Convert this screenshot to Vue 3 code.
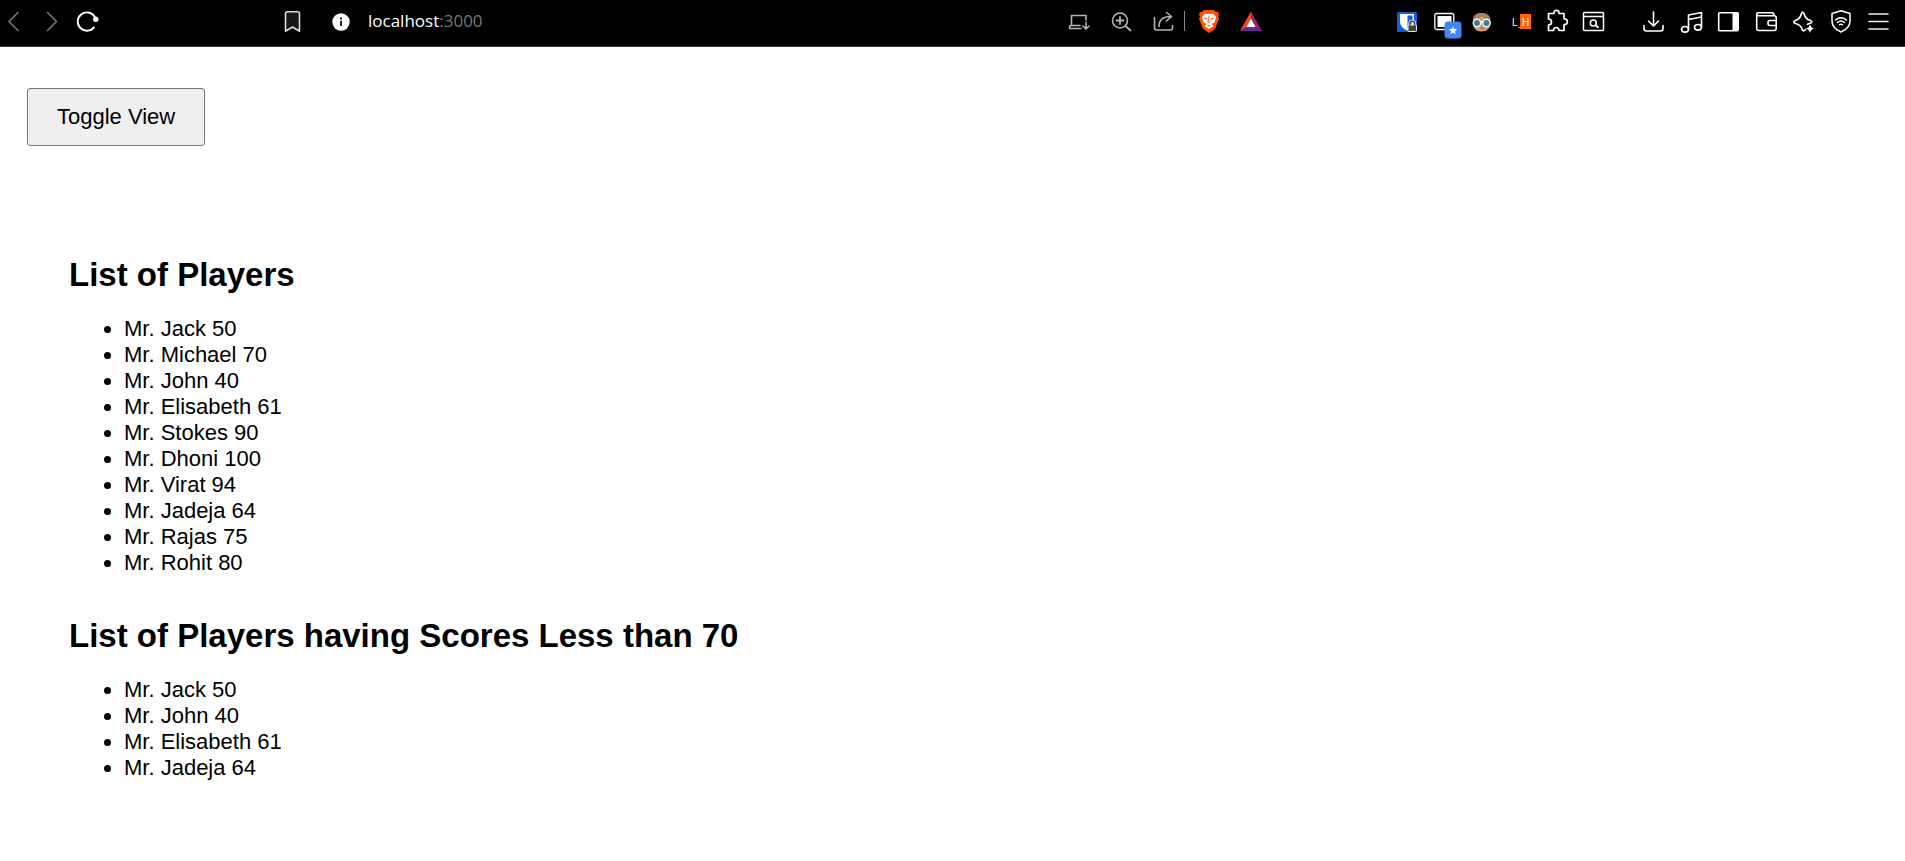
<script setup>
import { computed, ref } from 'vue'

const showing = ref(true)

const players = [
  { name: 'Jack', score: 50 },
  { name: 'Michael', score: 70 },
  { name: 'John', score: 40 },
  { name: 'Elisabeth', score: 61 },
  { name: 'Stokes', score: 90 },
  { name: 'Dhoni', score: 100 },
  { name: 'Virat', score: 94 },
  { name: 'Jadeja', score: 64 },
  { name: 'Rajas', score: 75 },
  { name: 'Rohit', score: 80 }
]

const lowScorers = computed(() => players.filter((p) => p.score < 70))
</script>

<template>
  <div class="window">
    <header class="toolbar">
      <nav class="nav" aria-label="History">
        <button class="icon dim" type="button" aria-label="Back">
          <svg viewBox="0 0 24 24"><path d="M17 3.5 8 12.5l9 9" /></svg>
        </button>
        <button class="icon dim" type="button" aria-label="Forward">
          <svg viewBox="0 0 24 24"><path d="M8.5 3.5l9 9-9 9" /></svg>
        </button>
        <button class="icon" type="button" aria-label="Reload">
          <svg viewBox="0 0 24 24">
            <path d="M17.6 7.500A9.200 9.200 0 1 0 17 18.400" stroke-width="1.9" />
            <circle class="solid" cx="18.800" cy="10.300" r="2.700" />
          </svg>
        </button>
      </nav>

      <div class="address">
        <button class="icon" type="button" aria-label="Bookmark this page">
          <svg viewBox="0 0 24 24">
            <path d="M7.500 2.700h10q2 0 2 2v17.500l-7-4.200-7 4.200V4.700q0-2 2-2z" fill="#161616" stroke="#ddd" stroke-width="1.6" />
          </svg>
        </button>
        <button class="icon site" type="button" aria-label="Site information">
          <svg viewBox="0 0 24 24">
            <circle class="solid" cx="12" cy="13" r="8.700" />
            <path d="M12 11.800V17" stroke="#222" stroke-width="2" stroke-linecap="butt" />
            <rect x="11" y="8.500" width="2" height="2" fill="#222" stroke="none" />
          </svg>
        </button>
        <div class="url" role="textbox" contenteditable="true" aria-label="Address">localhost<span class="port">:3000</span></div>
        <div class="tools">
          <button class="icon soft" type="button" aria-label="Install app">
            <svg viewBox="0 0 24 24">
              <path d="M19 11V6.500H4.500v10H13M4.500 16.500 2.700 17v2.500H14M19 13.500v6M16 17l3 3 3-3" />
            </svg>
          </button>
          <button class="icon soft" type="button" aria-label="Zoom">
            <svg viewBox="0 0 24 24">
              <circle cx="11" cy="11.500" r="7.500" />
              <path d="M16.500 17l5 4.500M7.500 11.500h7M11 8v7" stroke-width="1.8" />
            </svg>
          </button>
          <button class="icon soft" type="button" aria-label="Share">
            <svg viewBox="0 0 24 24">
              <path d="M3.500 8.500V19q0 2 2 2h14q2 0 2-2v-2.500M8 17.500C8 11 12 7.500 20 7.500M15.500 3.500l5 4-5 4.500" />
            </svg>
          </button>
        </div>
        <span class="divider"></span>
        <div class="tools">
          <button class="icon" type="button" aria-label="Brave Shields">
            <svg viewBox="0 0 24 24">
              <path d="M7 1h10l2 2 2-.3 1 3-1 2 1 2-3.500 9Q17 21.500 12 24 7 21.500 5.500 18.700L2 9.700l1-2-1-2 1-3L5 3z" fill="#ff5000" stroke="none" />
              <path d="M8 4.500l4 .6 4-.6 3 3.500-1.500 5.500-3 1.500 2 2L12 20l-4.500-3 2-2-3-1.500L5 8z" fill="#fff" stroke="none" />
              <path d="M7.500 9.500l2.500.5M16.500 9.500l-2.500.5M12 7v3l-1.200 2.500L12 13.500l1.200-1M10.500 17l1.500-.8 1.500.8" stroke="#ff5000" stroke-width="1" />
            </svg>
          </button>
          <button class="icon" type="button" aria-label="Brave Rewards">
            <svg viewBox="0 0 24 24">
              <g stroke="none">
                <path d="M12 2.500V10l-4 7.500L1 22z" fill="#ff4724" />
                <path d="M12 2.500 23 22l-7-4.500L12 10z" fill="#9e1f63" />
                <path d="M1 22l7-4.500h8l7 4.500z" fill="#662d91" />
                <path d="M12 9.500l4.500 8.500h-9z" fill="#fff" />
              </g>
            </svg>
          </button>
        </div>
      </div>

      <div class="extensions">
        <button class="icon" type="button" aria-label="Password manager">
          <svg viewBox="0 0 24 24">
            <g stroke="none">
              <rect x="1" y="3" width="20" height="20" rx="1.500" fill="#175ddc" />
              <path d="M4 5h14v8q0 5-7 8.500Q4 18 4 13z" fill="#fff" />
              <path d="M11.500 6.500h5V13q0 3-5 6z" fill="#175ddc" />
            </g>
            <path d="M13.800 16v-1.500q0-2.300 2.400-2.300t2.400 2.300V16" stroke="#e8e8e8" stroke-width="3" />
            <rect x="12" y="16" width="8.500" height="6.500" rx="1" fill="#444" stroke="#e8e8e8" stroke-width="1" />
            <path d="M13.800 16v-1.500q0-2.300 2.400-2.300t2.400 2.300V16" stroke="#444" stroke-width="1.400" />
          </svg>
        </button>
        <button class="icon" type="button" aria-label="Tab saver">
          <svg viewBox="0 0 24 24">
            <rect x="1.800" y="4.500" width="19" height="16" rx="2" stroke-width="1.300" />
            <rect class="solid" x="4.500" y="7" width="14" height="11" />
            <rect x="11.500" y="12.500" width="17" height="17" rx="3.500" fill="#4285f4" stroke="none" />
            <path class="solid" d="M20 17l1.100 3.100 3.300.1-2.600 2 .9 3.200-2.700-1.900-2.700 1.900.9-3.200-2.600-2 3.300-.1z" />
          </svg>
        </button>
        <button class="icon" type="button" aria-label="Profile">
          <svg viewBox="0 0 24 24">
            <g stroke="none">
              <path d="M3 13Q3 4 11.500 4T20.500 13q0 9.500-9 9.500T3 13z" fill="#d99a78" />
              <path d="M3 12Q2.500 4 11.500 4T20.500 12L17 11l-5-3.500L7 11z" fill="#a48661" />
              <path d="M9 18.500h6l-3 2z" fill="#b96d5a" />
            </g>
            <path d="M10 13h4" stroke-width="1.500" />
            <circle cx="7" cy="14" r="3.700" fill="#477b83" stroke="#e5f4f5" stroke-width="1.500" />
            <circle cx="16.500" cy="14" r="3.700" fill="#477b83" stroke="#e5f4f5" stroke-width="1.500" />
          </svg>
        </button>
        <button class="icon" type="button" aria-label="LH extension">
          <svg viewBox="0 0 24 24">
            <rect x="13" y="5" width="11" height="15" fill="#ff6600" stroke="none" />
            <text x="5" y="17">L</text>
            <text x="15" y="17">H</text>
            <path d="M11.500 18.500h1.500" stroke-width=".6" />
          </svg>
        </button>
        <button class="icon" type="button" aria-label="Extensions">
          <svg viewBox="0 0 24 24">
            <path d="M5 4.500h5C9 .3 16 .3 15 4.500h5V10c4.500-1 4.500 6.500 0 5.500v6h-5c0-4-5.500-4-5.500 0h-5V16c4 0 4-6 0-6V5q0-.5.500-.5z" stroke-width="1.700" />
          </svg>
        </button>
        <button class="icon" type="button" aria-label="Search tabs">
          <svg viewBox="0 0 24 24">
            <path d="M3.500 3.500h18q1 0 1 1v16q0 1-1 1h-18q-1 0-1-1v-16q0-1 1-1zM2.500 7.500h20" stroke-width="1.500" />
            <circle cx="12.300" cy="14" r="3" stroke-width="1.600" />
            <path d="M14.500 16.200l2.500 2" stroke-width="1.800" />
          </svg>
        </button>
      </div>

      <div class="system">
        <button class="icon" type="button" aria-label="Downloads">
          <svg viewBox="0 0 24 24">
            <path d="M13.500 3v14M8.500 12l5 5 5-5M4 16.500v3Q4 22 6.500 22h14q2.500 0 2.500-2.500v-3" />
          </svg>
        </button>
        <button class="icon" type="button" aria-label="Playlist">
          <svg viewBox="0 0 24 24">
            <path d="M10.500 20V6l13-2.500V18M10.500 10.500l13-2.500" />
            <ellipse cx="7" cy="20.300" rx="3.500" ry="2.800" />
            <ellipse cx="20" cy="18.300" rx="3.500" ry="2.800" />
          </svg>
        </button>
        <button class="icon" type="button" aria-label="Sidebar">
          <svg viewBox="0 0 24 24">
            <rect x="2.700" y="3.700" width="19.500" height="18" rx="1" />
            <path class="solid" d="M16.500 3.500H22V22h-5.500z" />
          </svg>
        </button>
        <button class="icon" type="button" aria-label="Wallet">
          <svg viewBox="0 0 24 24">
            <path d="M2.700 5.200q0-1.500 1.500-1.500H18q2 0 2 2.500M2.700 5.200q0 1.500 2 1.500H20q2.200 0 2.200 2v10.800q0 2-2 2H5q-2.300 0-2.300-2zM22 11.500h-6q-2 0-2 2v1q0 2 2 2h6" />
          </svg>
        </button>
        <button class="icon" type="button" aria-label="AI assistant">
          <svg viewBox="0 0 24 24">
            <path d="M13.500 20.500q-2.500 2.800-3.500-.5-1.300-4.200-6.500-5.500-3.500-1.500 0-3Q8 10 9.300 5q1.400-4 2.800 0 1.400 5 5.900 6.300 3.500 1.700 0 3l-2.500 1" stroke-width="1.700" />
            <path class="solid" d="M18 15.200q.9 3.600 4.300 4.400-3.400.8-4.300 4.400-.9-3.600-4.300-4.400 3.400-.8 4.300-4.400z" />
          </svg>
        </button>
        <button class="icon" type="button" aria-label="VPN">
          <svg viewBox="0 0 24 24">
            <path d="M11 1.800 20 4.500V12q0 7-9 11Q2 19 2 12V4.500zM5.500 11q5.500-4.500 11 0M7.500 13.500q3.500-2.800 7 0M9.500 15.700q1.500-1 3 0" stroke-width="1.500" />
          </svg>
        </button>
        <button class="icon" type="button" aria-label="Menu">
          <svg viewBox="0 0 24 24"><path d="M1 5h19M1 12.500h19M1 20h19" stroke="#eee" /></svg>
        </button>
      </div>
    </header>

    <main class="page">
      <button class="toggle" type="button" @click="showing = !showing">Toggle View</button>
      <div v-if="showing" class="lists">
        <section>
          <h1>List of Players</h1>
          <ul>
            <li v-for="p in players" :key="p.name">Mr. {{ p.name }} {{ p.score }}</li>
          </ul>
        </section>
        <section>
          <h1>List of Players having Scores Less than 70</h1>
          <ul>
            <li v-for="p in lowScorers" :key="p.name">Mr. {{ p.name }} {{ p.score }}</li>
          </ul>
        </section>
      </div>
    </main>
  </div>
</template>

<style>
body {
  margin: 0;
  background: #fff;
}
</style>

<style scoped>
.window {
  font-family: "Liberation Sans", Arial, sans-serif;
  color: #000;
}

.toolbar {
  display: flex;
  align-items: center;
  padding: 9px 13px 13px 1px;
  background: #000;
  border-bottom: 1px solid #333;
}

.nav,
.address,
.tools,
.extensions,
.system {
  display: flex;
  align-items: center;
}

.nav,
.system {
  gap: 14px;
}

.address {
  flex: 1;
  min-width: 0;
  margin-left: 179px;
}

.tools {
  gap: 18px;
}

.extensions {
  gap: 13px;
  margin-left: 133px;
}

.system {
  margin-left: 35px;
}

.icon {
  flex: none;
  width: 24px;
  height: 24px;
  padding: 0;
  border: 0;
  background: none;
  color: #fff;
}

.icon svg {
  display: block;
  width: 24px;
  height: 24px;
  overflow: visible;
  fill: none;
  stroke: currentColor;
  stroke-width: 1.6;
  stroke-linecap: round;
  stroke-linejoin: round;
}

.icon .solid {
  fill: currentColor;
  stroke: none;
}

.icon text {
  font: 10px "Liberation Sans", Arial, sans-serif;
  fill: #fff;
  stroke: none;
}

.dim {
  color: #777;
}

.soft {
  color: #b4b4b4;
}

.site {
  margin: 0 15px 0 25px;
}

.url {
  flex: 1;
  min-width: 0;
  overflow: hidden;
  white-space: nowrap;
  font: 17px/24px "Open Sans", "Noto Sans", sans-serif;
  color: #fff;
  outline: none;
}

.port {
  color: #777;
}

.divider {
  width: 1px;
  height: 20px;
  margin: 0 12px 0 9px;
  background: #888;
}

.page {
  padding: 41px 27px;
}

.toggle {
  padding: 16px 29px;
  border: 1px solid #767676;
  border-radius: 3px;
  background: #efefef;
  color: #000;
  font: 22px/24px "Liberation Sans", Arial, sans-serif;
}

.lists {
  display: flex;
  flex-direction: column;
  gap: 41px;
  padding: 110px 42px 0;
}

h1 {
  margin: 0 0 22px;
  font-size: 33px;
  line-height: 38px;
}

ul {
  margin: 0;
  padding-left: 55px;
  font-size: 22px;
  line-height: 26px;
}
</style>
